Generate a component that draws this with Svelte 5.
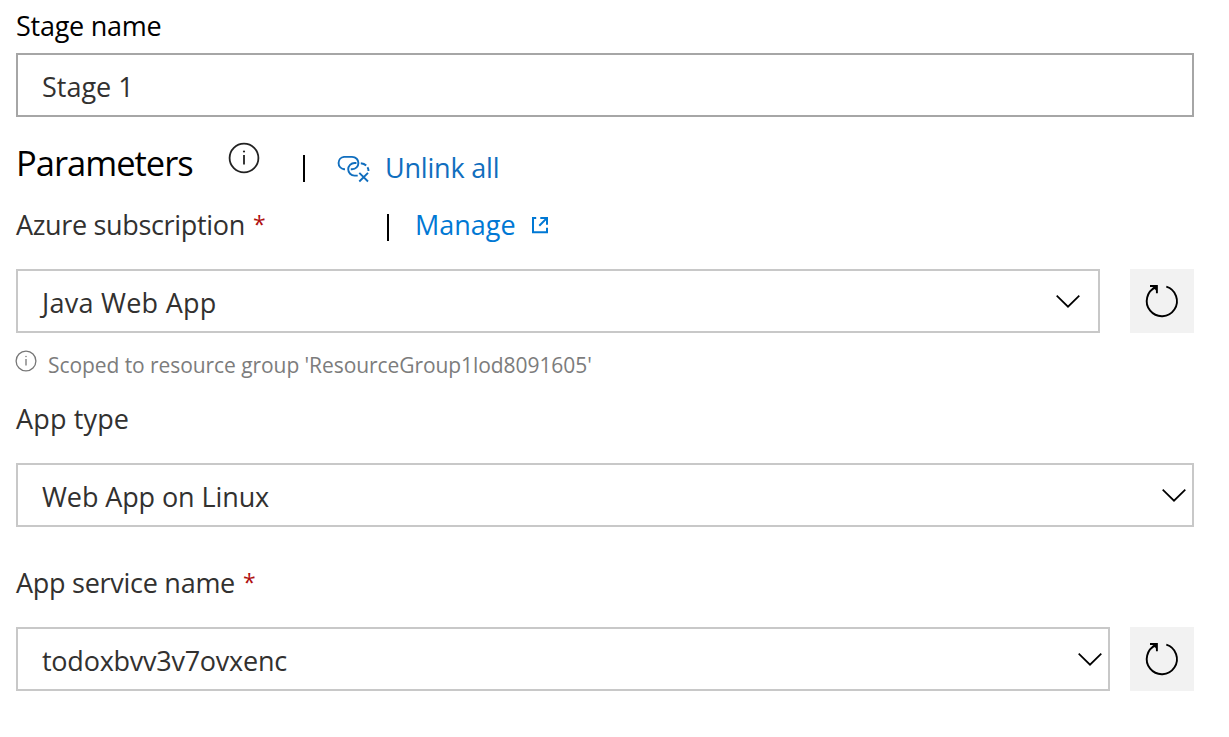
<script>
  let stageName = $state('Stage 1');
</script>

{#snippet chevron()}
  <svg class="chevron" width="26" height="16" viewBox="0 0 26 16" fill="none" stroke="#000" stroke-width="1.7">
    <path d="M1.7 1.6 L13 12.7 L24.3 1.6" />
  </svg>
{/snippet}

{#snippet refresh()}
  <button class="refresh" aria-label="Refresh">
    <svg width="36" height="36" viewBox="0 0 36 36" fill="none" stroke="#000" stroke-width="1.9">
      <path d="M22.3 3.7 A15.1 15.1 0 1 1 12 4.2" />
      <path d="M6 3 H12.9 V10.2" />
      <path d="M8.2 3.4 H12.5 V7.6 L10.5 5.8 Z" fill="#000" stroke-width="0.6" />
    </svg>
  </button>
{/snippet}

{#snippet info(size, color, width)}
  <svg class="info" width={size} height={size} viewBox="0 0 32 32" fill="none" stroke={color} stroke-width={width}>
    <circle cx="16" cy="16" r="14.4" />
    <path d="M16 13 V22.5" />
    <circle cx="16" cy="9.5" r="1.1" fill={color} stroke="none" />
  </svg>
{/snippet}

<main>
  <div class="label stage"><span class="t-stage">Stage name</span></div>
  <div class="box dark"><span>{stageName}</span></div>

  <div class="heading">
    <h2>Parameters</h2>
    {@render info(32, '#222', 1.8)}
    <i class="bar"></i>
    <a class="unlink" href="#unlink">
      <svg width="36" height="30" viewBox="0 0 36 30" fill="none" stroke="#106ebe" stroke-width="1.9">
        <path d="M9 15.2 H8 A6.2 6.2 0 0 1 8 2.9 H16 C20 2.9 22.4 5.8 22.4 9 C22.4 12.3 19.8 15.2 16 15.2 H14.8" />
        <path d="M20.4 9 H18.5 A6.3 6.3 0 0 0 18.5 21.6 H21.7" />
        <path d="M24.8 9.2 C27.2 9.4 29 10.3 30.2 11.5 M31.5 13.2 C32.3 14.6 32.6 15.6 32.5 17" />
        <path d="M23.3 18.8 L32 27.5 M32 18.8 L23.3 27.5" />
      </svg>
      <span class="t-unlink">Unlink all</span>
    </a>
  </div>

  <div class="label subscription">
    <span class="t-azure">Azure subscription</span><b>*</b>
    <i class="bar"></i>
    <a href="#manage">
      <span>Manage</span>
      <svg width="20" height="20" viewBox="0 0 20 20" fill="none" stroke="#0078d4" stroke-width="2">
        <path d="M6.2 3 H3 V17.2 H17 V12.8" />
        <path d="M10.3 3 H17 V9.7 M16.6 3.4 L9.3 10.7" />
      </svg>
    </a>
  </div>
  <div class="row first">
    <div class="box"><span class="t-java">Java Web App</span>{@render chevron()}</div>
    {@render refresh()}
  </div>

  <div class="hint">
    {@render info(22, '#777', 1.9)}
    <span>Scoped to resource group 'ResourceGroup1lod8091605'</span>
  </div>

  <div class="label type"><span class="t-type">App type</span></div>
  <div class="box tight"><span class="t-linux">Web App on Linux</span>{@render chevron()}</div>

  <div class="label service"><span class="t-service">App service name</span><b>*</b></div>
  <div class="row last">
    <div class="box tight"><span class="t-todo">todoxbvv3v7ovxenc</span>{@render chevron()}</div>
    {@render refresh()}
  </div>
</main>

<style>
  :global(body) { margin: 0; background: #fff; }
  main {
    box-sizing: border-box;
    width: 1229px;
    height: 737px;
    overflow: hidden;
    padding: 0 35px 0 16px;
    font-family: "Open Sans", "Noto Sans", sans-serif;
    font-size: 27px;
    font-weight: 400;
    color: #323130;
  }
  span, h2, b { white-space: nowrap; }
  .label { display: flex; box-sizing: border-box; line-height: 40px; }
  .stage { height: 53px; padding-top: 6px; color: #000; }
  .box {
    display: flex;
    justify-content: space-between;
    flex: 1;
    box-sizing: border-box;
    height: 64px;
    padding: 2px 17px 0 24px;
    border: 2px solid #c8c8c8;
    line-height: 60px;
  }
  .dark { border-color: #a6a6a6; }
  .tight { padding-right: 5px; }
  .chevron { margin-top: 21px; }
  .heading { display: flex; height: 88px; }
  h2 {
    margin: 21px 0 0;
    width: 212px;
    font-size: 34.5px;
    line-height: 50px;
    font-weight: 400;
    color: #000;
    letter-spacing: -1px;
  }
  .heading .info { margin-top: 25px; }
  .bar { width: 2px; height: 27px; background: #000; }
  .heading .bar { margin: 38px 31px 0 43px; }
  a { display: flex; color: #0078d4; text-decoration: none; }
  .unlink { color: #106ebe; line-height: 40px; margin-top: 31px; }
  .unlink svg { margin: 6px 13px 0 0; }
  .subscription { height: 64px; }
  b { color: #b01010; font-size: 23px; line-height: 38px; font-weight: 400; margin-left: 8px; }
  .subscription .bar { margin: 9px 26px 0 auto; }
  .subscription a { width: 779px; }
  .subscription svg { margin: 10px 0 0 14px; }
  .t-stage { letter-spacing: -0.25px; }
  .t-unlink { letter-spacing: -0.2px; }
  .t-azure { letter-spacing: -0.33px; }
  .t-java { letter-spacing: 0.25px; }
  .t-type { letter-spacing: 0.15px; }
  .t-linux { letter-spacing: -0.1px; }
  .t-service { letter-spacing: -0.27px; }
  .t-todo { letter-spacing: -0.25px; }
  .row { display: flex; gap: 30px; }
  .last { gap: 20px; }
  .refresh {
    display: flex;
    align-items: center;
    justify-content: center;
    width: 64px;
    height: 64px;
    padding: 0;
    border: 0;
    background: #f2f2f2;
  }
  .hint { display: flex; height: 66px; font-size: 21px; line-height: 30px; color: #7c7c7c; }
  .hint .info { margin: 17px 11px 0 -1px; }
  .hint span { margin-top: 17px; letter-spacing: -0.07px; }
  .type { height: 64px; }
  .service { height: 100px; padding-top: 36px; }
</style>
